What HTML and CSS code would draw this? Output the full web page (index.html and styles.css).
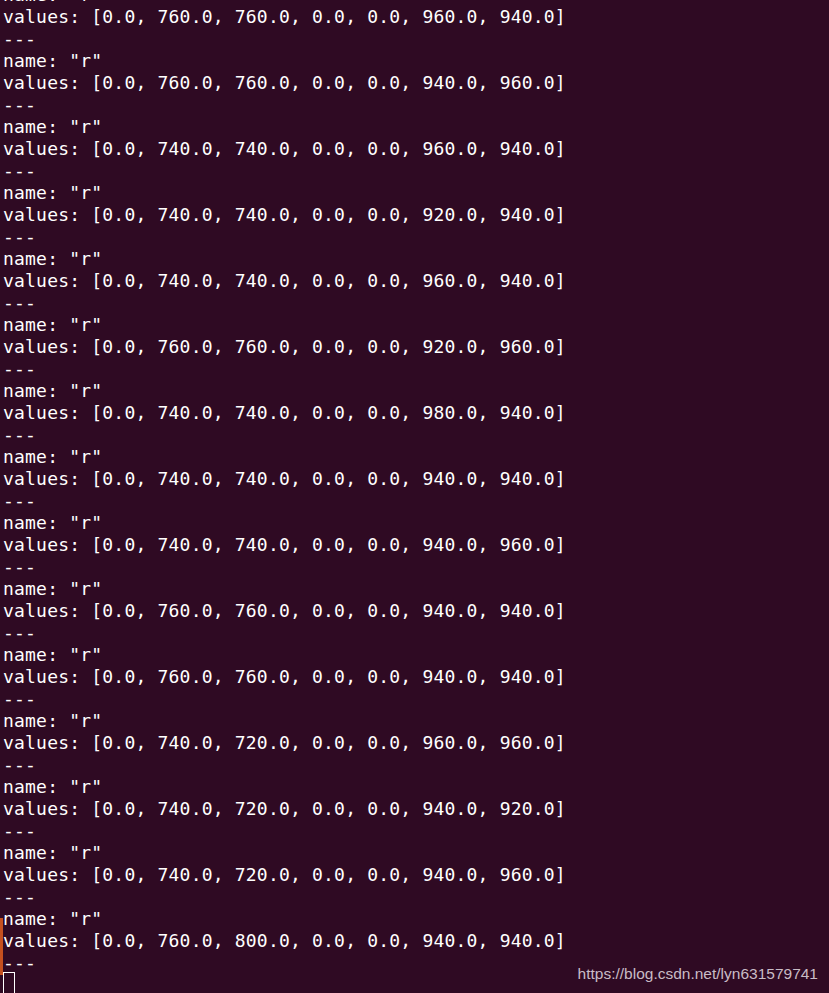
FILE: index.html
```html
<!DOCTYPE html>
<html>
<head>
<meta charset="utf-8">
<link rel="stylesheet" href="styles.css">
</head>
<body>
<div class="term">
<div class="edge"></div>
<pre class="out">name: "r"
values: [0.0, 760.0, 760.0, 0.0, 0.0, 960.0, 940.0]
---
name: "r"
values: [0.0, 760.0, 760.0, 0.0, 0.0, 940.0, 960.0]
---
name: "r"
values: [0.0, 740.0, 740.0, 0.0, 0.0, 960.0, 940.0]
---
name: "r"
values: [0.0, 740.0, 740.0, 0.0, 0.0, 920.0, 940.0]
---
name: "r"
values: [0.0, 740.0, 740.0, 0.0, 0.0, 960.0, 940.0]
---
name: "r"
values: [0.0, 760.0, 760.0, 0.0, 0.0, 920.0, 960.0]
---
name: "r"
values: [0.0, 740.0, 740.0, 0.0, 0.0, 980.0, 940.0]
---
name: "r"
values: [0.0, 740.0, 740.0, 0.0, 0.0, 940.0, 940.0]
---
name: "r"
values: [0.0, 740.0, 740.0, 0.0, 0.0, 940.0, 960.0]
---
name: "r"
values: [0.0, 760.0, 760.0, 0.0, 0.0, 940.0, 940.0]
---
name: "r"
values: [0.0, 760.0, 760.0, 0.0, 0.0, 940.0, 940.0]
---
name: "r"
values: [0.0, 740.0, 720.0, 0.0, 0.0, 960.0, 960.0]
---
name: "r"
values: [0.0, 740.0, 720.0, 0.0, 0.0, 940.0, 920.0]
---
name: "r"
values: [0.0, 740.0, 720.0, 0.0, 0.0, 940.0, 960.0]
---
name: "r"
values: [0.0, 760.0, 800.0, 0.0, 0.0, 940.0, 940.0]
---
<span class="cursor"> </span></pre>
<div class="mark">https://blog.csdn.net/lyn631579741</div>
</div>
</body>
</html>
```

FILE: styles.css
```css
html, body {
  margin: 0;
  padding: 0;
  background: #2f0a23;
  overflow: hidden;
}
.term {
  position: relative;
  width: 829px;
  height: 993px;
  overflow: hidden;
  background: #2f0a23;
}
.out {
  margin: -16px 0 0 0;
  padding: 0 0 0 3px;
  font-family: "DejaVu Sans Mono", monospace;
  font-size: 18px;
  letter-spacing: 0.2px;
  line-height: 22px;
  color: #ffffff;
  white-space: pre;
}
.cursor {
  display: inline-block;
  width: 12px;
  height: 26px;
  vertical-align: top;
  box-sizing: border-box;
  border: 1px solid #ffffff;
  margin-top: -2px;
  letter-spacing: 0;
}
.edge {
  position: absolute;
  left: 0;
  top: 918px;
  width: 3px;
  height: 57px;
  background: #c5501f;
}
.mark {
  position: absolute;
  right: 11px;
  top: 965px;
  font-family: "Liberation Sans", Arial, sans-serif;
  font-size: 15.5px;
  line-height: 18px;
  color: #c9bcc6;
}
```
